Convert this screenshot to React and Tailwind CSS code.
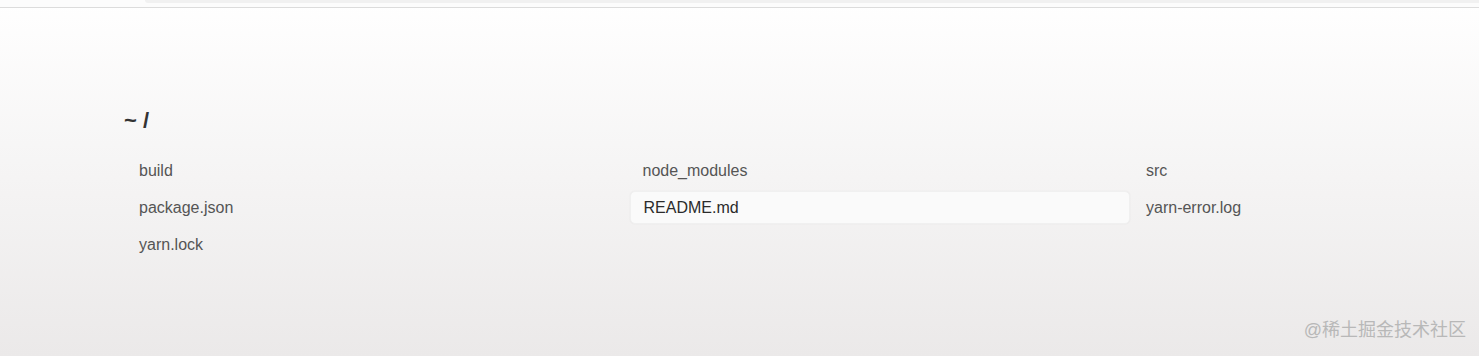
import React from 'react';

const files = ['build', 'node_modules', 'src', 'package.json', 'README.md', 'yarn-error.log', 'yarn.lock'];

const App = () => {
    const active = 'README.md';
    return (
        <div
            className="relative w-[1479px] h-[356px] overflow-hidden bg-gradient-to-b from-white to-[#ebe9e9]"
            style={{ fontFamily: '"Liberation Sans", Arial, sans-serif' }}
        >
            <div className="relative h-[8px] border-b border-[#dcdcdc] bg-[#fcfcfc]">
                <div className="ml-[145px] h-[3px] bg-[#f1f1f1] rounded-bl-md" />
            </div>

            <main className="pl-[124px] pt-[99px]">
                <h1 className="text-[22px] leading-[28px] font-bold text-[#333]">~ /</h1>
                <ul className="mt-[19px] ml-[2px] grid grid-cols-[500px_500px_500px] gap-x-[3.5px] gap-y-[4px]">
                    {files.map((name) => (
                        <li
                            key={name}
                            className={
                                name === active
                                    ? 'h-[33px] flex items-center px-[13px] rounded-[5px] bg-[#fafafa] text-[#2b2b2b] text-[16px] shadow-[0_0_2px_rgba(0,0,0,0.06)] border border-[#f0f0f0]'
                                    : 'h-[33px] flex items-center px-[13px] text-[#555] text-[16px]'
                            }
                        >
                            {name}
                        </li>
                    ))}
                </ul>
            </main>

            <div
                className="absolute right-[13px] bottom-[12px] text-[18px] text-[#b8b8b8]"
                style={{ fontFamily: '"Liberation Sans", "Noto Sans CJK SC", sans-serif' }}
            >
                @稀土掘金技术社区
            </div>
        </div>
    );
};

export default App;
